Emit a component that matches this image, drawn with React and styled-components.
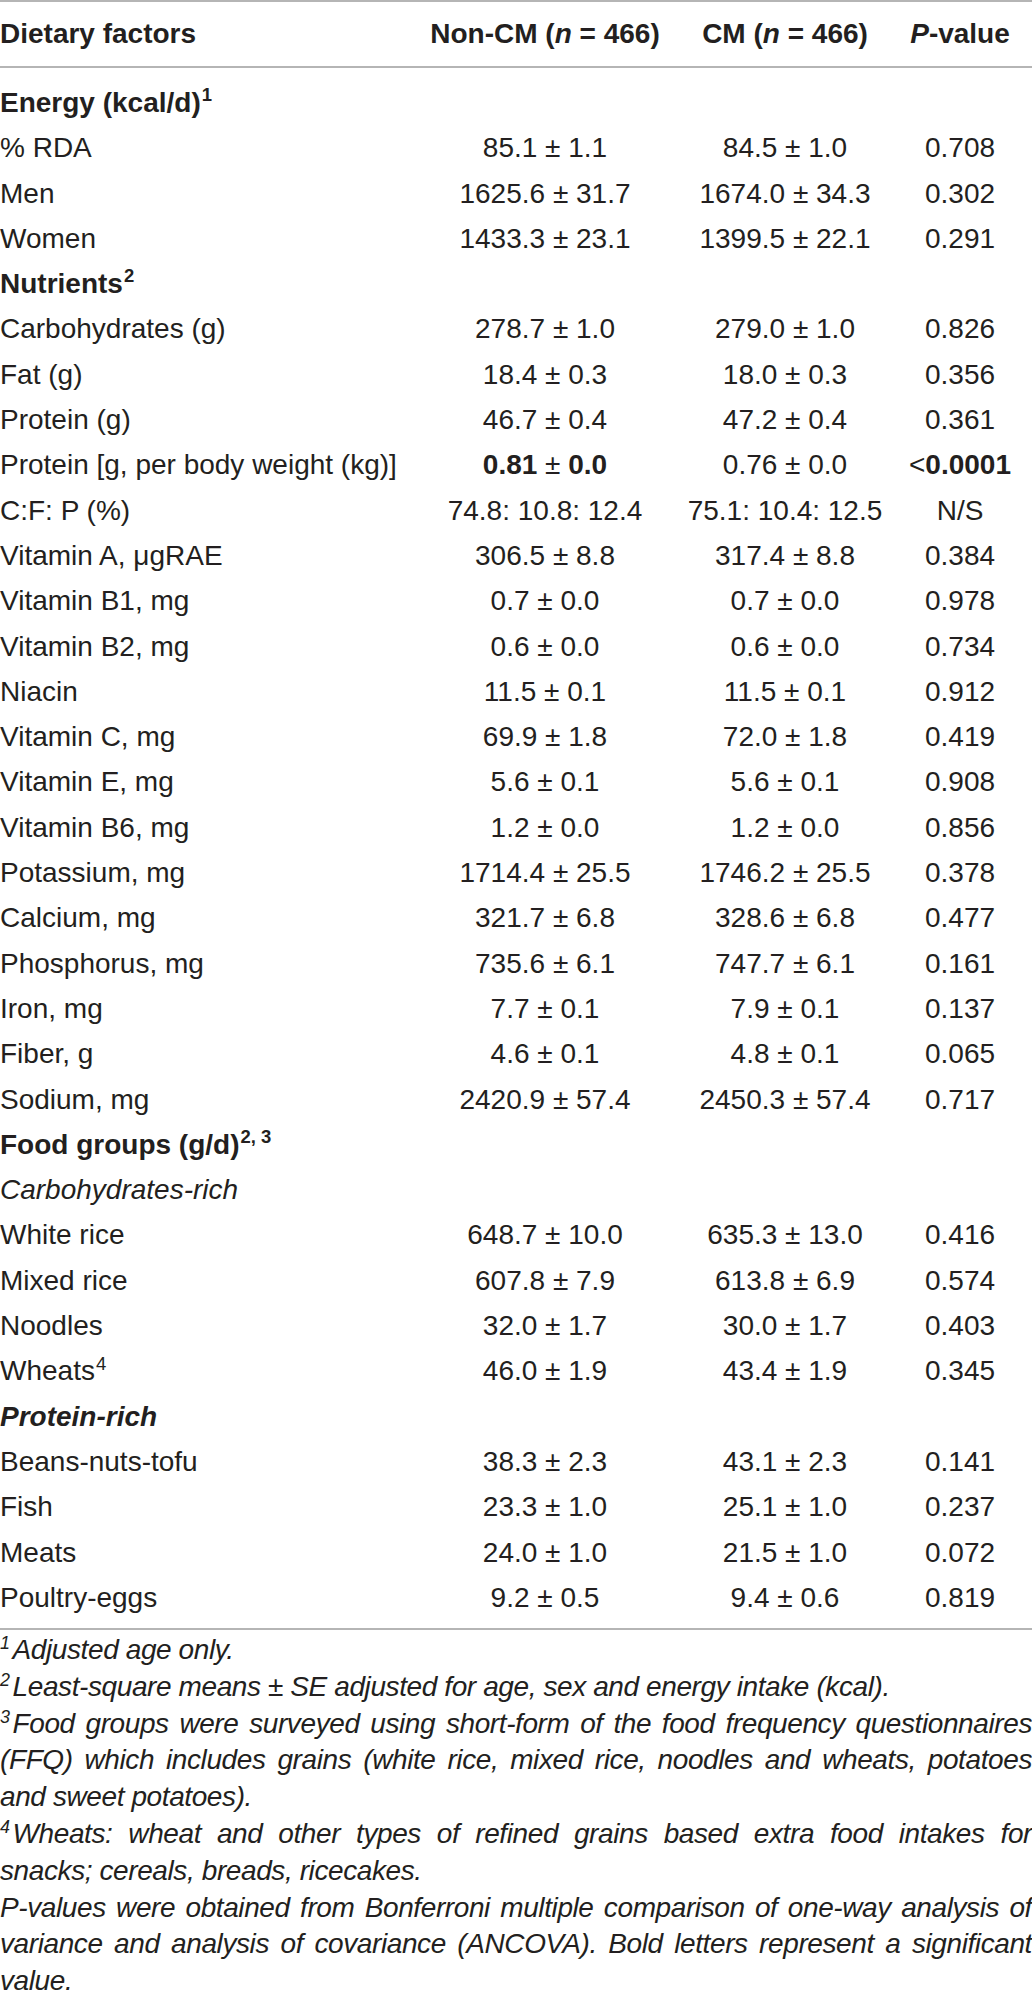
import styled, { createGlobalStyle } from "styled-components";

const GlobalStyle = createGlobalStyle`
    body{
        margin: 0;
        background: #ffffff;
        font-family: "Liberation Sans", Arial, Helvetica, sans-serif;
        color: #231f20;
    }
`;

const Page = styled.div`
    width: 1032px;
    height: 2004px;
    overflow: hidden;
    background: #ffffff;
`;

const Table = styled.table`
    width: 1032px;
    table-layout: fixed;
    border-collapse: collapse;
    border-top: 2px solid #b5b5b5;
    border-bottom: 2px solid #b5b5b5;
    font-size: 28px;

    thead tr{
        border-bottom: 2px solid #b5b5b5;
    }
    tbody tr:first-child td{
        padding-top: 12px;
    }
    tbody tr:last-child td{
        padding-bottom: 8px;
    }
`;

const Th = styled.th`
    height: 64px;
    padding: 0;
    font-weight: 700;
    text-align: ${(p) => (p.$center ? "center" : "left")};
    white-space: nowrap;
    vertical-align: middle;
`;

const Td = styled.td`
    height: 45.3px;
    padding: 0;
    line-height: 45.3px;
    text-align: ${(p) => (p.$center ? "center" : "left")};
    white-space: nowrap;
    vertical-align: middle;
`;

const Section = styled.span`
    font-weight: 700;
`;

const SubHead = styled.span`
    font-style: italic;
    font-weight: ${(p) => (p.$bold ? 700 : 400)};
`;

const Sup = styled.sup`
    font-size: 0.66em;
    line-height: 0;
    vertical-align: 0.58em;
    font-weight: ${(p) => (p.$light ? 400 : 700)};
    margin-left: 1px;
`;

const Notes = styled.div`
    padding-top: 2px;
    font-size: 28px;
    font-style: italic;
    letter-spacing: -0.4px;
    line-height: 36.8px;
`;

const NoteLine = styled.div`
    text-align: ${(p) => (p.$justify ? "justify" : "left")};
    text-align-last: ${(p) => (p.$justify ? "justify" : "left")};
`;

const NoteSup = styled.sup`
    font-size: 0.64em;
    line-height: 0;
    vertical-align: 0.55em;
    margin-right: 3px;
`;

// label, non-CM, CM, p ; section / sub rows carry only a label
const rows = [
    { type: "section", label: <>Energy (kcal/d)<Sup>1</Sup></> },
    { cells: ["% RDA", "85.1 ± 1.1", "84.5 ± 1.0", "0.708"] },
    { cells: ["Men", "1625.6 ± 31.7", "1674.0 ± 34.3", "0.302"] },
    { cells: ["Women", "1433.3 ± 23.1", "1399.5 ± 22.1", "0.291"] },
    { type: "section", label: <>Nutrients<Sup>2</Sup></> },
    { cells: ["Carbohydrates (g)", "278.7 ± 1.0", "279.0 ± 1.0", "0.826"] },
    { cells: ["Fat (g)", "18.4 ± 0.3", "18.0 ± 0.3", "0.356"] },
    { cells: ["Protein (g)", "46.7 ± 0.4", "47.2 ± 0.4", "0.361"] },
    {
        cells: [
            "Protein [g, per body weight (kg)]",
            <><b>0.81</b> ± <b>0.0</b></>,
            "0.76 ± 0.0",
            <>&lt;<b>0.0001</b></>,
        ],
    },
    { cells: ["C:F: P (%)", "74.8: 10.8: 12.4", "75.1: 10.4: 12.5", "N/S"] },
    { cells: ["Vitamin A, μgRAE", "306.5 ± 8.8", "317.4 ± 8.8", "0.384"] },
    { cells: ["Vitamin B1, mg", "0.7 ± 0.0", "0.7 ± 0.0", "0.978"] },
    { cells: ["Vitamin B2, mg", "0.6 ± 0.0", "0.6 ± 0.0", "0.734"] },
    { cells: ["Niacin", "11.5 ± 0.1", "11.5 ± 0.1", "0.912"] },
    { cells: ["Vitamin C, mg", "69.9 ± 1.8", "72.0 ± 1.8", "0.419"] },
    { cells: ["Vitamin E, mg", "5.6 ± 0.1", "5.6 ± 0.1", "0.908"] },
    { cells: ["Vitamin B6, mg", "1.2 ± 0.0", "1.2 ± 0.0", "0.856"] },
    { cells: ["Potassium, mg", "1714.4 ± 25.5", "1746.2 ± 25.5", "0.378"] },
    { cells: ["Calcium, mg", "321.7 ± 6.8", "328.6 ± 6.8", "0.477"] },
    { cells: ["Phosphorus, mg", "735.6 ± 6.1", "747.7 ± 6.1", "0.161"] },
    { cells: ["Iron, mg", "7.7 ± 0.1", "7.9 ± 0.1", "0.137"] },
    { cells: ["Fiber, g", "4.6 ± 0.1", "4.8 ± 0.1", "0.065"] },
    { cells: ["Sodium, mg", "2420.9 ± 57.4", "2450.3 ± 57.4", "0.717"] },
    { type: "section", label: <>Food groups (g/d)<Sup>2, 3</Sup></> },
    { type: "sub", label: "Carbohydrates-rich" },
    { cells: ["White rice", "648.7 ± 10.0", "635.3 ± 13.0", "0.416"] },
    { cells: ["Mixed rice", "607.8 ± 7.9", "613.8 ± 6.9", "0.574"] },
    { cells: ["Noodles", "32.0 ± 1.7", "30.0 ± 1.7", "0.403"] },
    { cells: [<>Wheats<Sup $light>4</Sup></>, "46.0 ± 1.9", "43.4 ± 1.9", "0.345"] },
    { type: "sub", label: "Protein-rich", bold: true },
    { cells: ["Beans-nuts-tofu", "38.3 ± 2.3", "43.1 ± 2.3", "0.141"] },
    { cells: ["Fish", "23.3 ± 1.0", "25.1 ± 1.0", "0.237"] },
    { cells: ["Meats", "24.0 ± 1.0", "21.5 ± 1.0", "0.072"] },
    { cells: ["Poultry-eggs", "9.2 ± 0.5", "9.4 ± 0.6", "0.819"] },
];

const notes = [
    { text: <><NoteSup>1</NoteSup>Adjusted age only.</> },
    { text: <><NoteSup>2</NoteSup>Least-square means ± SE adjusted for age, sex and energy intake (kcal).</> },
    { text: <><NoteSup>3</NoteSup>Food groups were surveyed using short-form of the food frequency questionnaires</>, justify: true },
    { text: "(FFQ) which includes grains (white rice, mixed rice, noodles and wheats, potatoes", justify: true },
    { text: "and sweet potatoes)." },
    { text: <><NoteSup>4</NoteSup>Wheats: wheat and other types of refined grains based extra food intakes for</>, justify: true },
    { text: "snacks; cereals, breads, ricecakes." },
    { text: "P-values were obtained from Bonferroni multiple comparison of one-way analysis of", justify: true },
    { text: "variance and analysis of covariance (ANCOVA). Bold letters represent a significant", justify: true },
    { text: "value." },
];

const App = () => {
    return (
        <Page>
            <GlobalStyle />
            <Table>
                <colgroup>
                    <col style={{ width: "408px" }} />
                    <col style={{ width: "274px" }} />
                    <col style={{ width: "206px" }} />
                    <col style={{ width: "144px" }} />
                </colgroup>
                <thead>
                    <tr>
                        <Th>Dietary factors</Th>
                        <Th $center>Non-CM (<i>n</i> = 466)</Th>
                        <Th $center>CM (<i>n</i> = 466)</Th>
                        <Th $center><i>P</i>-value</Th>
                    </tr>
                </thead>
                <tbody>
                    {rows.map((row, i) =>
                        row.cells ? (
                            <tr key={i}>
                                {row.cells.map((c, j) => (
                                    <Td key={j} $center={j > 0}>{c}</Td>
                                ))}
                            </tr>
                        ) : (
                            <tr key={i}>
                                <Td colSpan={4}>
                                    {row.type === "section" ? (
                                        <Section>{row.label}</Section>
                                    ) : (
                                        <SubHead $bold={row.bold}>{row.label}</SubHead>
                                    )}
                                </Td>
                            </tr>
                        )
                    )}
                </tbody>
            </Table>
            <Notes>
                {notes.map((n, i) => (
                    <NoteLine key={i} $justify={n.justify}>{n.text}</NoteLine>
                ))}
            </Notes>
        </Page>
    );
};

export default App;
